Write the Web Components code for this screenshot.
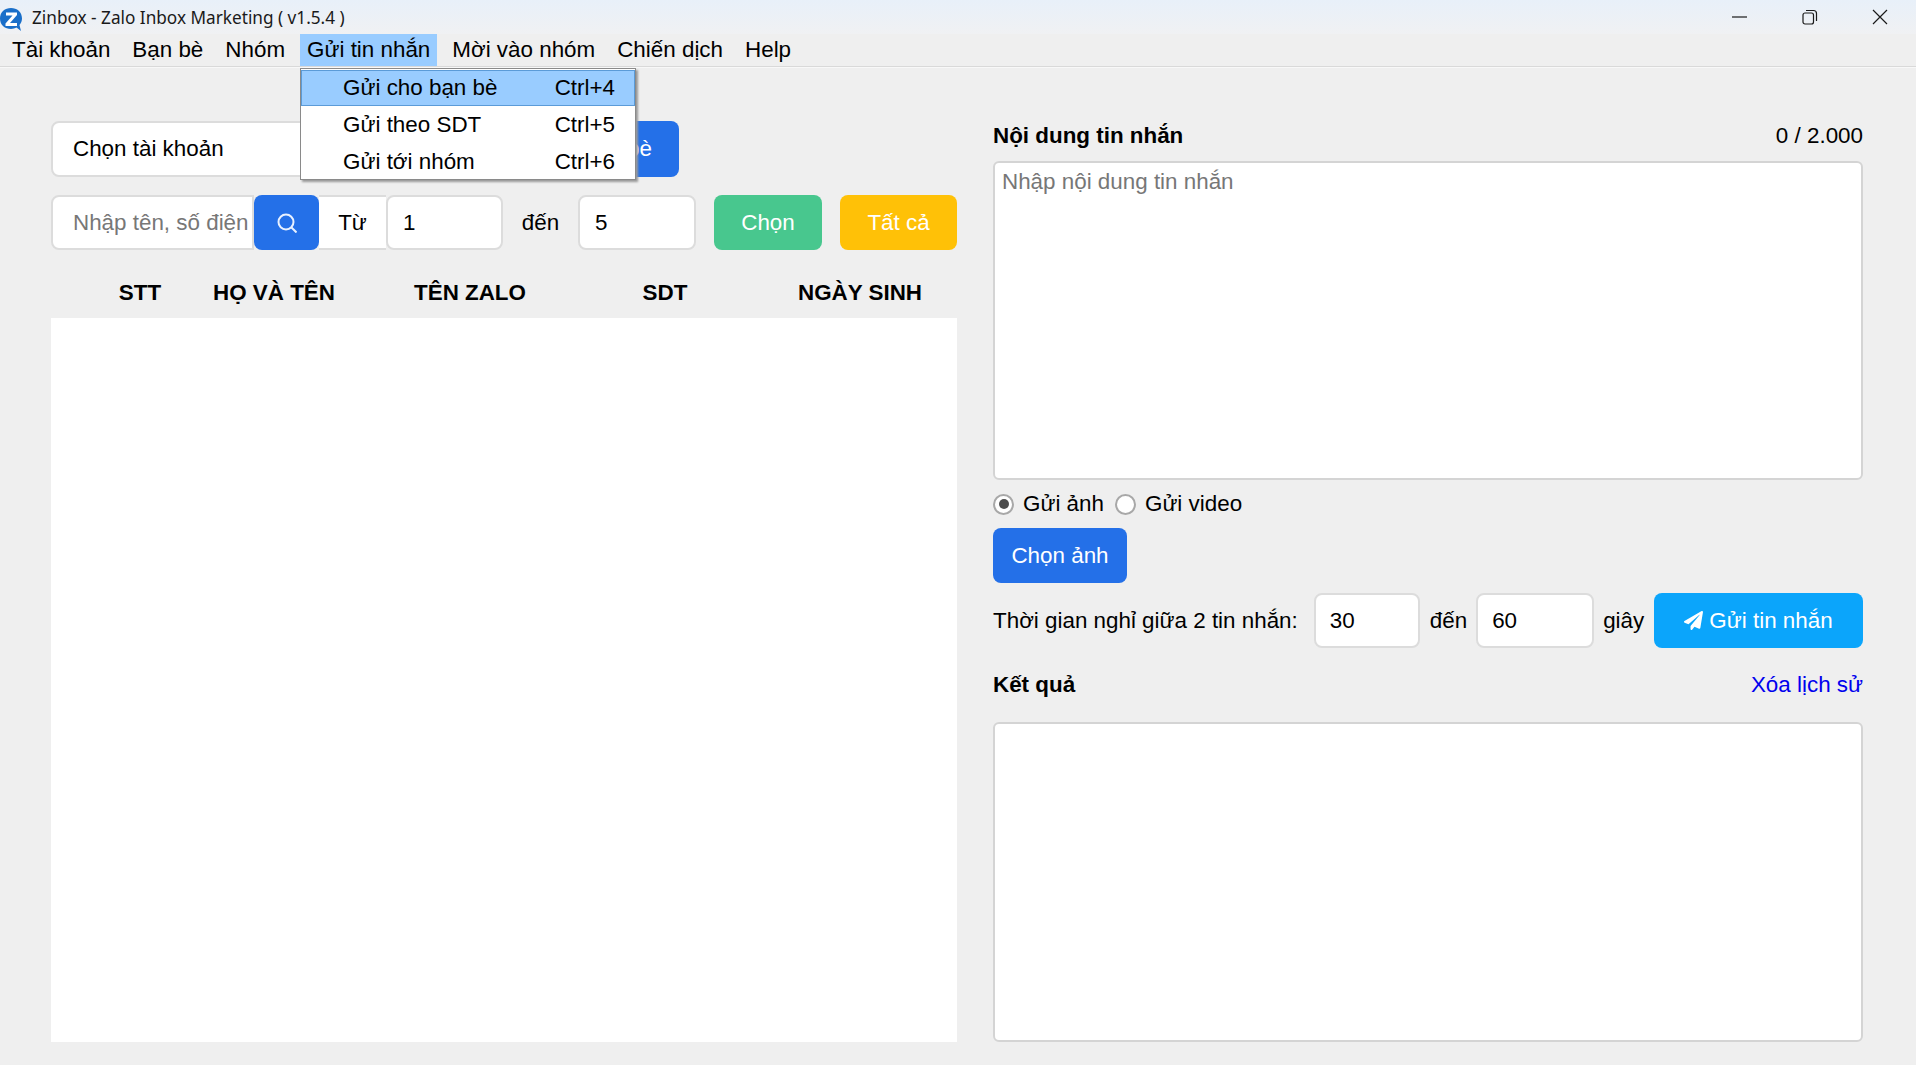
<!DOCTYPE html>
<html lang="vi">
<head>
<meta charset="utf-8">
<title>Zinbox - Zalo Inbox Marketing</title>
<style>
  html, body { margin: 0; height: 100%; }
  body { background: #efefef; color: #000; font: 22.4px "Liberation Sans", Arial, sans-serif; overflow: hidden; }
</style>
</head>
<body>
<zb-app></zb-app>

<script>
class ZbTitlebar extends HTMLElement {
  constructor() {
    super();
    this.shadowDOM = this.attachShadow({mode: 'open'});
    this.shadowDOM.innerHTML = `
    <style>
    :host{
      display: flex;
      align-items: center;
      height: 34px;
      background: linear-gradient(#e8f0f9, #f0f1f3);
      font: 17.2px "Noto Sans", sans-serif;
      color: #1a1a1a;
    }
    .logo{
      width: 24px;
      height: 26px;
      margin: 3px 8px 0 0;
      flex: none;
    }
    .title{
      flex: 1;
      white-space: nowrap;
    }
    .controls{
      display: flex;
      align-items: center;
      gap: 54px;
      padding-right: 28px;
    }
    svg.ctl{
      width: 16px;
      height: 16px;
      fill: none;
      stroke: #1a1a1a;
      stroke-width: 1.2;
    }
    </style>
    <svg class="logo" viewBox="0 0 24 26">
      <path d="M11 2C5 2 0 6 0 12.500S5 23 11 23c2 0 4-.5 5.500-1.400L21 25l-1.500-6c1.600-1.800 2.500-4 2.500-6.500C22 6 17 2 11 2z" fill="#1a6fc9"/>
      <path d="M6 6.500h11v2.500l-7 8h7v3H5.500v-2.600l7-8H6z" fill="#fff"/>
    </svg>
    <div class="title"><slot></slot></div>
    <div class="controls">
      <svg class="ctl" viewBox="0 0 16 16"><path d="M0 8h15"/></svg>
      <svg class="ctl" viewBox="0 0 16 16"><rect x="1" y="4" width="10.500" height="11" rx="2"/><path d="M4 1.500h7.500a3 3 0 0 1 3 3V12"/></svg>
      <svg class="ctl" viewBox="0 0 16 16"><path d="M1 1l14 14M15 1L1 15"/></svg>
    </div>
    `;
  }
}
customElements.define('zb-titlebar', ZbTitlebar);

class ZbMenubar extends HTMLElement {
  constructor() {
    super();
    this.shadowDOM = this.attachShadow({mode: 'open'});
    this.shadowDOM.innerHTML = `
    <style>
    :host{
      display: flex;
      gap: 8px;
      height: 32px;
      padding-left: 5px;
      border-bottom: 1px solid #d9d9d9;
      box-shadow: 0 1px 0 #f8f8f8;
      position: relative;
      z-index: 5;
    }
    </style>
    <slot></slot>
    `;
  }
}
customElements.define('zb-menubar', ZbMenubar);

class ZbMenuitem extends HTMLElement {
  constructor() {
    super();
    this.shadowDOM = this.attachShadow({mode: 'open'});
    this.shadowDOM.innerHTML = `
    <style>
    :host{
      display: block;
      position: relative;
      padding: 0 7px;
      line-height: 32px;
      white-space: nowrap;
    }
    :host([open]){
      background: #99ccff;
    }
    </style>
    <slot></slot>
    <slot name="menu"></slot>
    `;
  }
}
customElements.define('zb-menuitem', ZbMenuitem);

class ZbDropdown extends HTMLElement {
  constructor() {
    super();
    this.shadowDOM = this.attachShadow({mode: 'open'});
    this.shadowDOM.innerHTML = `
    <style>
    :host{
      display: block;
      position: absolute;
      top: 34px;
      left: 0;
      width: 334px;
      background: #fff;
      border: 1px solid #8a8a8a;
      box-shadow: 2px 2px 2px #9a9a9a;
      padding-top: 1px;
    }
    </style>
    <slot></slot>
    `;
  }
}
customElements.define('zb-dropdown', ZbDropdown);

class ZbDropItem extends HTMLElement {
  constructor() {
    super();
    this.shadowDOM = this.attachShadow({mode: 'open'});
    this.shadowDOM.innerHTML = `
    <style>
    :host{
      display: flex;
      justify-content: space-between;
      height: 36px;
      line-height: 34px;
      padding: 0 19px 0 41px;
      border: 1px solid transparent;
      box-sizing: border-box;
      margin-bottom: 1px;
    }
    :host(:last-child){
      margin-bottom: 0;
      height: 35px;
    }
    :host([active]){
      background: #99ccff;
      border-color: #5b9bd8;
    }
    </style>
    <span><slot></slot></span>
    <span>${this.getAttribute('keys')}</span>
    `;
  }
}
customElements.define('zb-dropitem', ZbDropItem);

class ZbBox extends HTMLElement {
  constructor() {
    super();
    this.shadowDOM = this.attachShadow({mode: 'open'});
    this.shadowDOM.innerHTML = `
    <style>
    :host{
      display: flex;
      align-items: center;
      box-sizing: border-box;
      height: 55px;
      padding: 0 20px;
      background: #fff;
      border: 2px solid #dcdcdc;
      border-radius: 8px;
      white-space: nowrap;
    }
    </style>
    <slot></slot>
    `;
  }
}
customElements.define('zb-box', ZbBox);

class ZbButton extends HTMLElement {
  constructor() {
    super();
    this.shadowDOM = this.attachShadow({mode: 'open'});
    this.shadowDOM.innerHTML = `
    <style>
    :host{
      display: flex;
      align-items: center;
      justify-content: center;
      gap: 6px;
      box-sizing: border-box;
      height: 55px;
      padding: 0 18px;
      color: #fff;
      background: var(--btn, #2470e8);
      border-radius: 8px;
      white-space: nowrap;
    }
    :host([tone="green"]){ --btn: #48c78e; }
    :host([tone="yellow"]){ --btn: #ffc107; }
    :host([tone="sky"]){ --btn: #0ba5fb; }
    </style>
    <slot></slot>
    `;
  }
}
customElements.define('zb-button', ZbButton);

class ZbRadio extends HTMLElement {
  constructor() {
    super();
    this.shadowDOM = this.attachShadow({mode: 'open'});
    this.shadowDOM.innerHTML = `
    <style>
    :host{
      display: flex;
      align-items: center;
      gap: 9px;
      height: 24px;
    }
    .dot{
      box-sizing: border-box;
      width: 21px;
      height: 21px;
      border-radius: 50%;
      border: 2px solid #a8a8a8;
      background: #fff;
      display: grid;
      place-items: center;
    }
    :host([checked]) .dot::after{
      content: "";
      width: 10px;
      height: 10px;
      border-radius: 50%;
      background: #4d4d4d;
    }
    </style>
    <span class="dot"></span>
    <span><slot></slot></span>
    `;
  }
}
customElements.define('zb-radio', ZbRadio);

class ZbFriends extends HTMLElement {
  constructor() {
    super();
    this.shadowDOM = this.attachShadow({mode: 'open'});
    this.shadowDOM.innerHTML = `
    <style>
    :host{
      display: flex;
      flex-direction: column;
      min-width: 0;
    }
    .row{
      display: flex;
      align-items: center;
    }
    .pick{
      margin-bottom: 18px;
      width: 628px;
    }
    .pick zb-box{ flex: 1; height: 56px; border-radius: 8px 0 0 8px; }
    .pick zb-button{ height: 56px; padding: 0 27px; border-radius: 0 8px 8px 0; }
    .search{ flex: none; width: 203px; color: #777; border-radius: 8px 0 0 8px; padding-right: 0; }
    .go{ flex: none; width: 65px; padding: 0; }
    .go svg{ width: 20px; height: 20px; fill: none; stroke: #e8f1ff; stroke-width: 2; }
    .tu{ flex: none; width: 67px; height: 55px; background: #fff; display: flex; align-items: center; justify-content: center; box-sizing: border-box; border: solid #dcdcdc; border-width: 2px 0; }
    .num{ flex: none; width: 117px; padding: 0 15px; }
    .num.last{ width: 118px; }
    .den{ flex: none; width: 75px; text-align: center; }
    .chon{ flex: none; width: 108px; margin-left: 18px; padding: 0; }
    .all{ flex: none; width: 117px; margin-left: 18px; padding: 0; }
    .head{
      display: grid;
      grid-template-columns: 98px 170px 222px 168px 208px;
      box-sizing: border-box;
      padding: 18px 0 0 40px;
      height: 68px;
      align-items: center;
      font-weight: bold;
      text-align: center;
      white-space: nowrap;
    }
    .head .end{ padding-left: 14px; }
    .body{
      flex: 1;
      background: #fff;
    }
    </style>
    <div class="row pick">
      <zb-box>Chọn tài khoản</zb-box>
      <zb-button>Bạn bè</zb-button>
    </div>
    <div class="row">
      <zb-box class="search">Nhập tên, số điện</zb-box>
      <zb-button class="go">
        <svg viewBox="0 0 20 20"><circle cx="9" cy="9" r="7.500"/><path d="M14.500 14.500l5 5"/></svg>
      </zb-button>
      <div class="tu">Từ</div>
      <zb-box class="num">1</zb-box>
      <div class="den">đến</div>
      <zb-box class="num last">5</zb-box>
      <zb-button class="chon" tone="green">Chọn</zb-button>
      <zb-button class="all" tone="yellow">Tất cả</zb-button>
    </div>
    <div class="head">
      <span>STT</span>
      <span>HỌ VÀ TÊN</span>
      <span>TÊN ZALO</span>
      <span>SDT</span>
      <span class="end">NGÀY SINH</span>
    </div>
    <div class="body"></div>
    `;
  }
}
customElements.define('zb-friends', ZbFriends);

class ZbComposer extends HTMLElement {
  constructor() {
    super();
    this.shadowDOM = this.attachShadow({mode: 'open'});
    this.shadowDOM.innerHTML = `
    <style>
    :host{
      display: flex;
      flex-direction: column;
      min-width: 0;
    }
    .line{
      display: flex;
      justify-content: space-between;
      align-items: center;
      height: 30px;
    }
    .line b{ font-weight: bold; }
    .area{
      box-sizing: border-box;
      background: #fff;
      border: 2px solid #d4d4d4;
      border-radius: 6px;
      padding: 6px 7px;
    }
    .msg{ height: 319px; margin-top: 10px; color: #777; }
    .radios{
      display: flex;
      gap: 11px;
      margin: 12px 0;
    }
    .pick{ align-self: flex-start; width: 134px; padding: 0; }
    .delay{
      display: flex;
      align-items: center;
      margin-top: 10px;
    }
    .delay zb-box{ padding: 0 14px; }
    .sec{ width: 106px; margin-left: 16px; }
    .den{ margin: 0 9px 0 10px; }
    .till{ width: 118px; }
    .giay{ margin-left: 9px; }
    .send{ margin-left: auto; width: 209px; padding: 0; }
    .send svg{ width: 19px; height: 19px; fill: #fff; }
    .result{ margin-top: 22px; }
    .log{ flex: 1; margin-top: 22px; }
    a{ color: #0000ee; text-decoration: none; }
    </style>
    <div class="line"><b>Nội dung tin nhắn</b><span>0 / 2.000</span></div>
    <div class="area msg">Nhập nội dung tin nhắn</div>
    <div class="radios">
      <zb-radio checked>Gửi ảnh</zb-radio>
      <zb-radio>Gửi video</zb-radio>
    </div>
    <zb-button class="pick">Chọn ảnh</zb-button>
    <div class="delay">
      <span>Thời gian nghỉ giữa 2 tin nhắn:</span>
      <zb-box class="sec">30</zb-box>
      <span class="den">đến</span>
      <zb-box class="till">60</zb-box>
      <span class="giay">giây</span>
      <zb-button class="send" tone="sky">
        <svg viewBox="0 0 512 512"><path d="M476 3.200L12.500 270.600c-18.100 10.400-15.800 35.600 2.200 43.200L121 358.400l287.300-253.200c5.500-4.900 13.300 2.600 8.600 8.300L176 407v80.500c0 23.600 28.500 32.900 42.500 15.800L282 426l124.600 52.200c14.200 6 30.400-2.900 33-18.200l72-432C515 7.800 493.300-6.800 476 3.200z"/></svg>
        Gửi tin nhắn
      </zb-button>
    </div>
    <div class="line result"><b>Kết quả</b><a href="#">Xóa lịch sử</a></div>
    <div class="area log"></div>
    `;
  }
}
customElements.define('zb-composer', ZbComposer);

class ZbApp extends HTMLElement {
  constructor() {
    super();
    this.shadowDOM = this.attachShadow({mode: 'open'});
    this.shadowDOM.innerHTML = `
    <style>
    :host{
      display: flex;
      flex-direction: column;
      height: 1065px;
    }
    main{
      flex: 1;
      display: grid;
      grid-template-columns: 906px 870px;
      gap: 36px;
      padding: 54px 53px 23px 51px;
      min-height: 0;
    }
    </style>
    <zb-titlebar>Zinbox - Zalo Inbox Marketing ( v1.5.4 )</zb-titlebar>
    <zb-menubar>
      <zb-menuitem>Tài khoản</zb-menuitem>
      <zb-menuitem>Bạn bè</zb-menuitem>
      <zb-menuitem>Nhóm</zb-menuitem>
      <zb-menuitem open>
        Gửi tin nhắn
        <zb-dropdown slot="menu">
          <zb-dropitem active keys="Ctrl+4">Gửi cho bạn bè</zb-dropitem>
          <zb-dropitem keys="Ctrl+5">Gửi theo SDT</zb-dropitem>
          <zb-dropitem keys="Ctrl+6">Gửi tới nhóm</zb-dropitem>
        </zb-dropdown>
      </zb-menuitem>
      <zb-menuitem>Mời vào nhóm</zb-menuitem>
      <zb-menuitem>Chiến dịch</zb-menuitem>
      <zb-menuitem>Help</zb-menuitem>
    </zb-menubar>
    <main>
      <zb-friends></zb-friends>
      <zb-composer></zb-composer>
    </main>
    `;
  }
}
customElements.define('zb-app', ZbApp);
</script>
</body>
</html>
